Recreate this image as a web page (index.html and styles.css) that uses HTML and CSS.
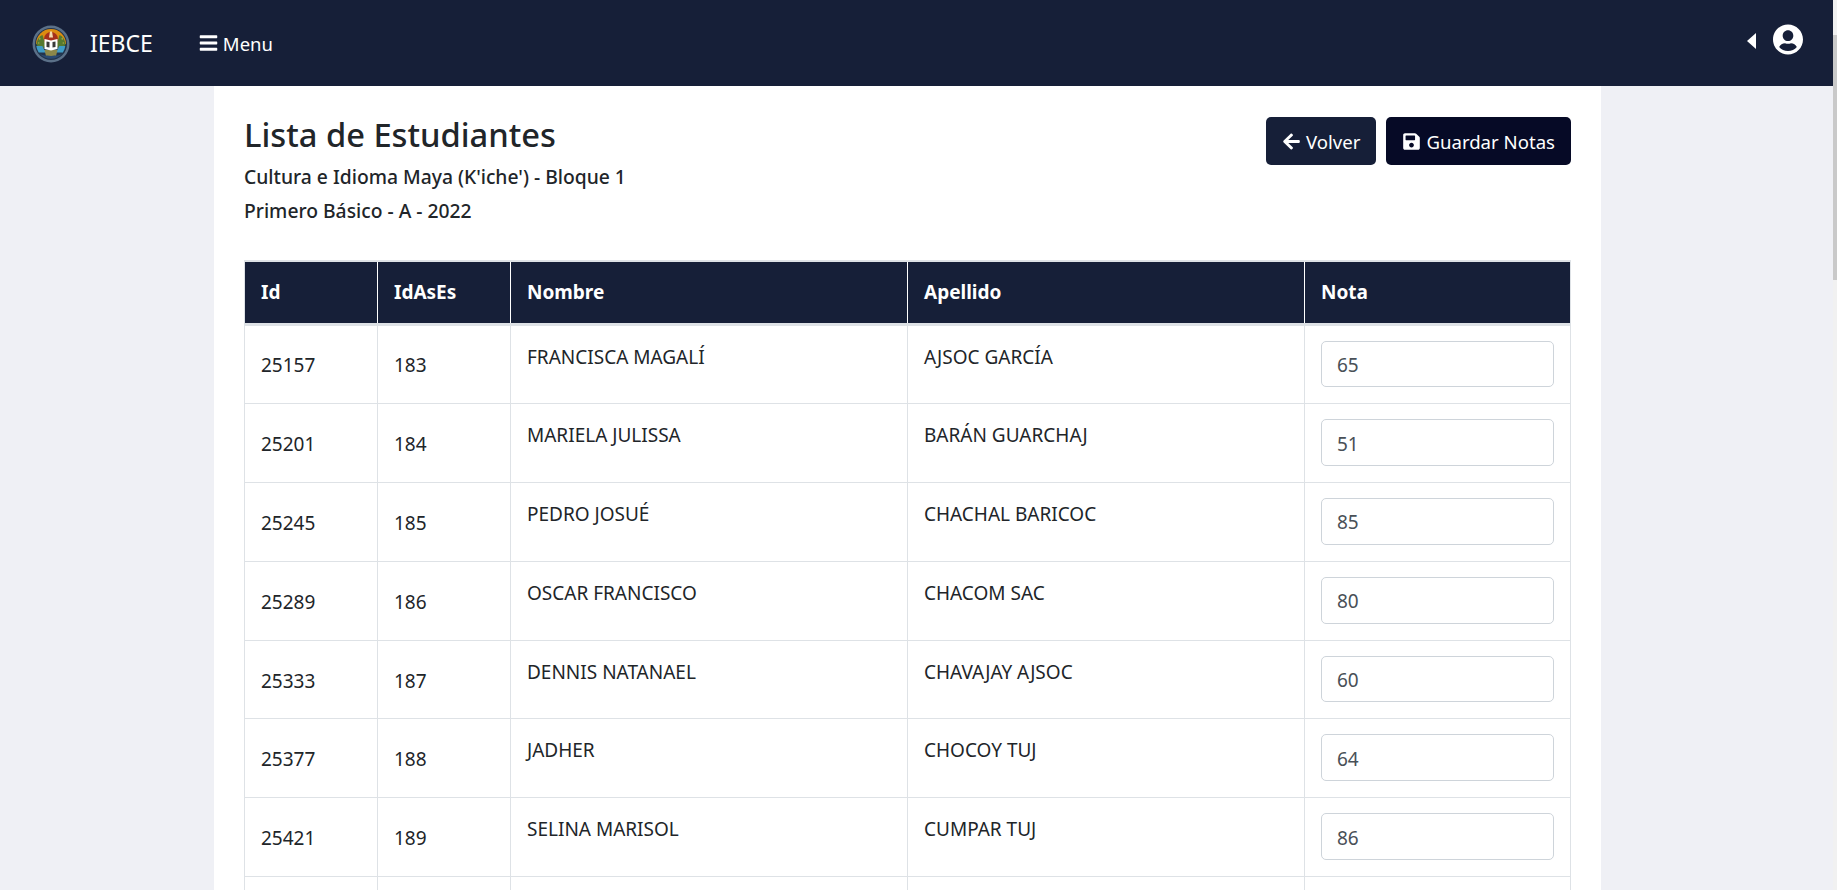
FILE: index.html
```html
<!DOCTYPE html>
<html lang="es">
<head>
  <meta charset="utf-8">
  <title>Lista de Estudiantes</title>
  <link rel="stylesheet" href="styles.css">
</head>
<body>
<div class="page">
  <nav class="navbar">
    <a class="brand">
      <svg class="logo" viewBox="0 0 38 38">
        <circle cx="19" cy="19" r="18.5" fill="#5b7088"/>
        <circle cx="19" cy="19" r="16" fill="#22344c"/>
        <path d="M4 19a15 15 0 0 1 30 0z" fill="#dc8c10"/>
        <path d="M12 14a7 7 0 0 1 14 0v3H12z" fill="#a5301b"/>
        <path d="M18 6.500h2l1 6h-4z" fill="#f3dcae"/>
        <path d="M4.500 20c0-5 3-9 6-10l3 10-3 5zM33.500 20c0-5-3-9-6-10l-3 10 3 5z" fill="#56792f"/>
        <path d="M7 12l2 2-2 1zM31 12l-2 2 2 1zM6 17l2 1-2 1zM32 17l-2 1 2 1z" fill="#9aa53c"/>
        <path d="M4.300 21h6l2 4h13l2-4h6a15 15 0 0 1-2.400 6.500H6.700A15 15 0 0 1 4.300 21z" fill="#3f9cc6"/>
        <path d="M12.500 25h13l-1.500 6c-2 1.500-8 1.500-10 0z" fill="#8c884a"/>
        <path d="M8 29c3 2 6 1 11 2 5-1 8 0 11-2a15 15 0 0 1-22 0z" fill="#2a4a72"/>
        <path d="M12.500 14l6.500 1.500 6.500-1.500v10l-6.500 1.500-6.500-1.500z" fill="#fff"/>
        <path d="M14.500 16.500l3 .6v5.500l-3-.6zM23.500 16.500l-3 .6v5.500l3-.6z" fill="#3a3a3a"/>
      </svg>
      <span class="brand-name">IEBCE</span>
    </a>
    <a class="menu-link">
      <svg class="icon icon-bars" viewBox="0 0 448 512"><path d="M16 132h416c8.837 0 16-7.163 16-16V76c0-8.837-7.163-16-16-16H16C7.163 60 0 67.163 0 76v40c0 8.837 7.163 16 16 16zm0 160h416c8.837 0 16-7.163 16-16v-40c0-8.837-7.163-16-16-16H16c-8.837 0-16 7.163-16 16v40c0 8.837 7.163 16 16 16zm0 160h416c8.837 0 16-7.163 16-16v-40c0-8.837-7.163-16-16-16H16c-8.837 0-16 7.163-16 16v40c0 8.837 7.163 16 16 16z"/></svg>
      Menu
    </a>
    <div class="user">
      <span class="caret"></span>
      <svg class="icon icon-user" viewBox="0 0 496 512"><path d="M248 8C111 8 0 119 0 256s111 248 248 248 248-111 248-248S385 8 248 8zm0 96c48.6 0 88 39.4 88 88s-39.4 88-88 88-88-39.4-88-88 39.4-88 88-88zm0 344c-58.7 0-111.3-26.6-146.5-68.2 18.8-35.4 55.6-59.8 98.5-59.8 2.4 0 4.8.4 7.1 1.1 13 4.2 26.6 6.9 40.9 6.9 14.3 0 28-2.7 40.9-6.9 2.3-.7 4.7-1.1 7.1-1.1 42.9 0 79.7 24.4 98.5 59.8C359.3 421.4 306.7 448 248 448z"/></svg>
    </div>
  </nav>

  <main class="content">
    <div class="head">
      <div>
        <h1>Lista de Estudiantes</h1>
        <h2>Cultura e Idioma Maya (K'iche') - Bloque 1</h2>
        <h2>Primero Básico - A - 2022</h2>
      </div>
      <div class="actions">
        <a class="btn">
          <svg class="icon icon-btn" viewBox="0 0 448 512"><path d="M257.5 445.1l-22.2 22.2c-9.4 9.4-24.6 9.4-33.9 0L7 273c-9.4-9.4-9.4-24.6 0-33.9L201.4 44.7c9.4-9.4 24.6-9.4 33.9 0l22.2 22.2c9.5 9.5 9.3 25-.4 34.3L136.6 216H424c13.3 0 24 10.7 24 24v32c0 13.3-10.7 24-24 24H136.6l120.5 114.8c9.8 9.3 10 24.8.4 34.3z"/></svg>
          Volver
        </a>
        <a class="btn btn-dark">
          <svg class="icon icon-btn" viewBox="0 0 448 512"><path d="M433.941 129.941l-83.882-83.882A48 48 0 0 0 316.118 32H48C21.49 32 0 53.49 0 80v352c0 26.51 21.49 48 48 48h352c26.51 0 48-21.49 48-48V163.882a48 48 0 0 0-14.059-33.941zM224 416c-35.346 0-64-28.654-64-64 0-35.346 28.654-64 64-64s64 28.654 64 64c0 35.346-28.654 64-64 64zm96-304.52V212c0 6.627-5.373 12-12 12H76c-6.627 0-12-5.373-12-12V108c0-6.627 5.373-12 12-12h228.52c3.183 0 6.235 1.264 8.485 3.515l3.48 3.48A11.996 11.996 0 0 1 320 111.48z"/></svg>
          Guardar Notas
        </a>
      </div>
    </div>

    <table class="students">
      <colgroup>
        <col class="col-id"><col class="col-id"><col class="col-name"><col class="col-name"><col>
      </colgroup>
      <thead>
        <tr><th>Id</th><th>IdAsEs</th><th>Nombre</th><th>Apellido</th><th>Nota</th></tr>
      </thead>
      <tbody>
        <tr><td class="mid">25157</td><td class="mid">183</td><td>FRANCISCA MAGALÍ</td><td>AJSOC GARCÍA</td><td class="nota"><input type="text" value="65"></td></tr>
        <tr><td class="mid">25201</td><td class="mid">184</td><td>MARIELA JULISSA</td><td>BARÁN GUARCHAJ</td><td class="nota"><input type="text" value="51"></td></tr>
        <tr><td class="mid">25245</td><td class="mid">185</td><td>PEDRO JOSUÉ</td><td>CHACHAL BARICOC</td><td class="nota"><input type="text" value="85"></td></tr>
        <tr><td class="mid">25289</td><td class="mid">186</td><td>OSCAR FRANCISCO</td><td>CHACOM SAC</td><td class="nota"><input type="text" value="80"></td></tr>
        <tr><td class="mid">25333</td><td class="mid">187</td><td>DENNIS NATANAEL</td><td>CHAVAJAY AJSOC</td><td class="nota"><input type="text" value="60"></td></tr>
        <tr><td class="mid">25377</td><td class="mid">188</td><td>JADHER</td><td>CHOCOY TUJ</td><td class="nota"><input type="text" value="64"></td></tr>
        <tr><td class="mid">25421</td><td class="mid">189</td><td>SELINA MARISOL</td><td>CUMPAR TUJ</td><td class="nota"><input type="text" value="86"></td></tr>
        <tr class="empty"><td></td><td></td><td></td><td></td><td></td></tr>
      </tbody>
    </table>
  </main>
</div>
<div class="rail"><div class="thumb"></div></div>
</body>
</html>
```

FILE: styles.css
```css
html, body { margin: 0; padding: 0; height: 100%; overflow: hidden; }
body { display: flex; font-family: "Noto Sans", "Open Sans", sans-serif; font-size: 19px; color: #212529; background: #eff0f5; }

.page { flex: 1; min-width: 0; height: 890px; overflow: hidden; }

/* barra de scroll */
.rail { width: 4px; background: #f1f1f1; padding-top: 35px; box-sizing: border-box; }
.thumb { height: 245px; background: #c9c9c9; }

/* barra superior */
.navbar { height: 86px; display: flex; align-items: center; background: #161f38; color: #fff; padding: 0 30px 0 32px; }
.brand { display: flex; align-items: center; }
.logo { width: 38px; height: 38px; margin-top: 1px; }
.brand-name { font-size: 23px; margin-left: 20px; }
.menu-link { display: flex; align-items: center; margin-left: 46px; font-size: 18.5px; }
.icon { fill: currentColor; display: block; }
.icon-bars { width: 19px; height: 20px; margin-right: 5px; }
.user { margin-left: auto; display: flex; align-items: center; }
.caret { width: 0; height: 0; border-style: solid; border-width: 8px 9px 8px 0; border-color: transparent #fff transparent transparent; margin: 0 17px 4px 0; }
.icon-user { width: 30px; height: 31px; margin-bottom: 7px; }

/* contenido */
.content { margin: 0 232px 0 214px; min-height: 3020px; background: #fff; padding: 29px 30px 0; }
.head { display: flex; justify-content: space-between; align-items: flex-start; height: 145px; }
h1 { margin: 0 0 5px; font-size: 32.7px; line-height: 40px; font-weight: 500; }
h2 { margin: 0; font-size: 19.3px; line-height: 34px; font-weight: 500; }
.actions { display: flex; gap: 10px; margin-top: 2px; }
.btn { display: flex; align-items: center; height: 48px; box-sizing: border-box; padding: 1px 16px 0; border-radius: 5px; background: #161f38; color: #fff; font-size: 18.6px; }
.btn-dark { background: #060a26; }
.icon-btn { width: 19px; height: 19px; margin-right: 5px; }

/* tabla */
.students { width: 100%; border-collapse: collapse; table-layout: fixed; border-top: 2px solid #dee2e6; }
.col-id { width: 133px; }
.col-name { width: 397px; }
.students th { background: #161f38; color: #fff; text-align: left; font-weight: 700; height: 60.5px; padding: 0 16px; border-left: 1px solid #fff; border-bottom: 3px solid #dee2e6; }
.students th:first-child { border-left: 1px solid #dee2e6; }
.students th:last-child { border-right: 1px solid #dee2e6; }
.students td { padding: 16px; line-height: 30px; vertical-align: top; border: 1px solid #dee2e6; color: #212529; }
.students td.mid { vertical-align: middle; padding-top: 18px; }
.students td.nota { padding: 15px 16px 16px; }
.students .empty td { height: 47px; }
input { display: block; width: 100%; height: 46.8px; box-sizing: border-box; padding: 7px 15px 5px; border: 1px solid #ced4da; border-radius: 5px; font: inherit; color: #495057; background: #fff; }
```
